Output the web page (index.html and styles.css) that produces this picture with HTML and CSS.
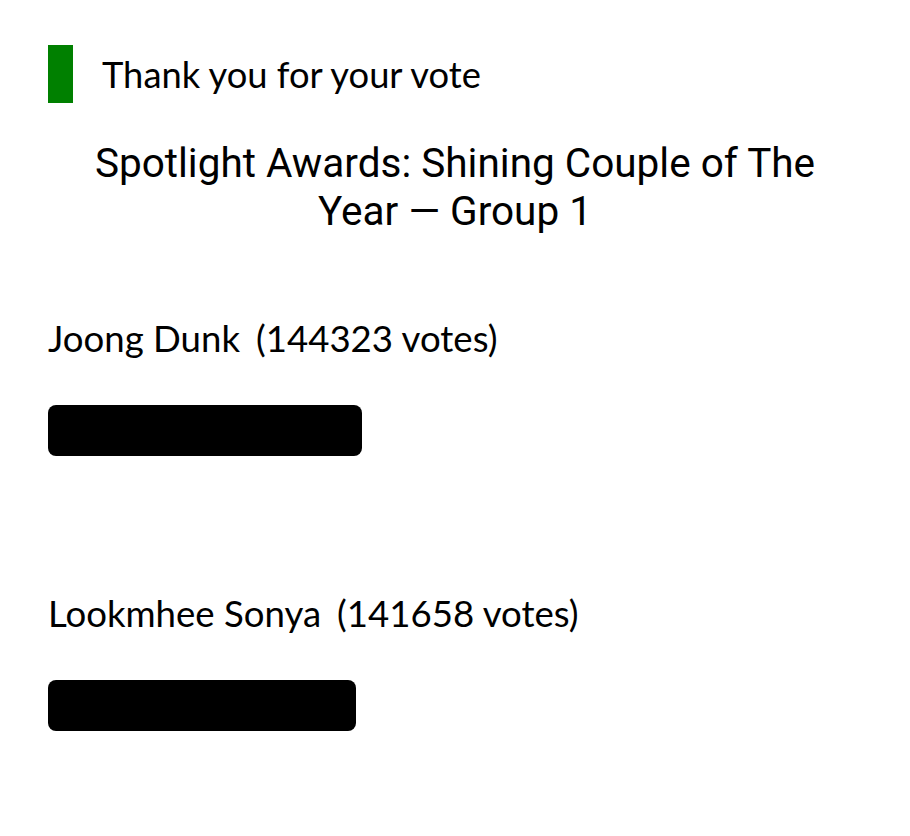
FILE: index.html
```html
<!DOCTYPE html>
<html lang="en">
<head>
<meta charset="utf-8">
<title>Poll results</title>
<link rel="stylesheet" href="styles.css">
</head>
<body>
<main class="page">
  <header class="notice">
    <span class="notice-mark"></span>
    <span class="notice-text">Thank you for your vote</span>
  </header>

  <h1 class="poll-title">Spotlight Awards: Shining Couple of The Year — Group 1</h1>

  <section class="results">
    <div class="result">
      <div class="result-label">
        <span class="result-name">Joong Dunk</span>
        <span class="result-votes">(144323 votes)</span>
      </div>
      <div class="result-track">
        <div class="result-bar" style="width: 50.47%"></div>
      </div>
    </div>
    <div class="result">
      <div class="result-label">
        <span class="result-name">Lookmhee Sonya</span>
        <span class="result-votes">(141658 votes)</span>
      </div>
      <div class="result-track">
        <div class="result-bar" style="width: 49.53%"></div>
      </div>
    </div>
  </section>
</main>
</body>
</html>
```

FILE: styles.css
```css
html, body {
  margin: 0;
  padding: 0;
  background: #ffffff;
  color: #000000;
}

.page {
  padding: 45px 48px 40px;
  font-family: Lato, "Liberation Sans", sans-serif;
}

.notice {
  display: flex;
  align-items: center;
  gap: 29px;
}

.notice-mark {
  width: 25px;
  height: 58px;
  background: #008000;
  flex: none;
}

.notice-text {
  font-size: 36.3px;
  line-height: 1;
}

.poll-title {
  margin: 36px auto 0;
  max-width: 760px;
  text-align: center;
  font-family: Roboto, sans-serif;
  font-weight: 400;
  font-size: 40.5px;
  line-height: 48px;
}

.results {
  margin-top: 83px;
  display: flex;
  flex-direction: column;
  gap: 137px;
}

.result {
  display: flex;
  flex-direction: column;
  gap: 47px;
}

.result-label {
  display: flex;
  gap: 16px;
  font-size: 36.6px;
  line-height: 40px;
}

.result-track {
  width: 622px;
}

.result-bar {
  height: 51px;
  background: #000000;
  border-radius: 8px;
}
```
